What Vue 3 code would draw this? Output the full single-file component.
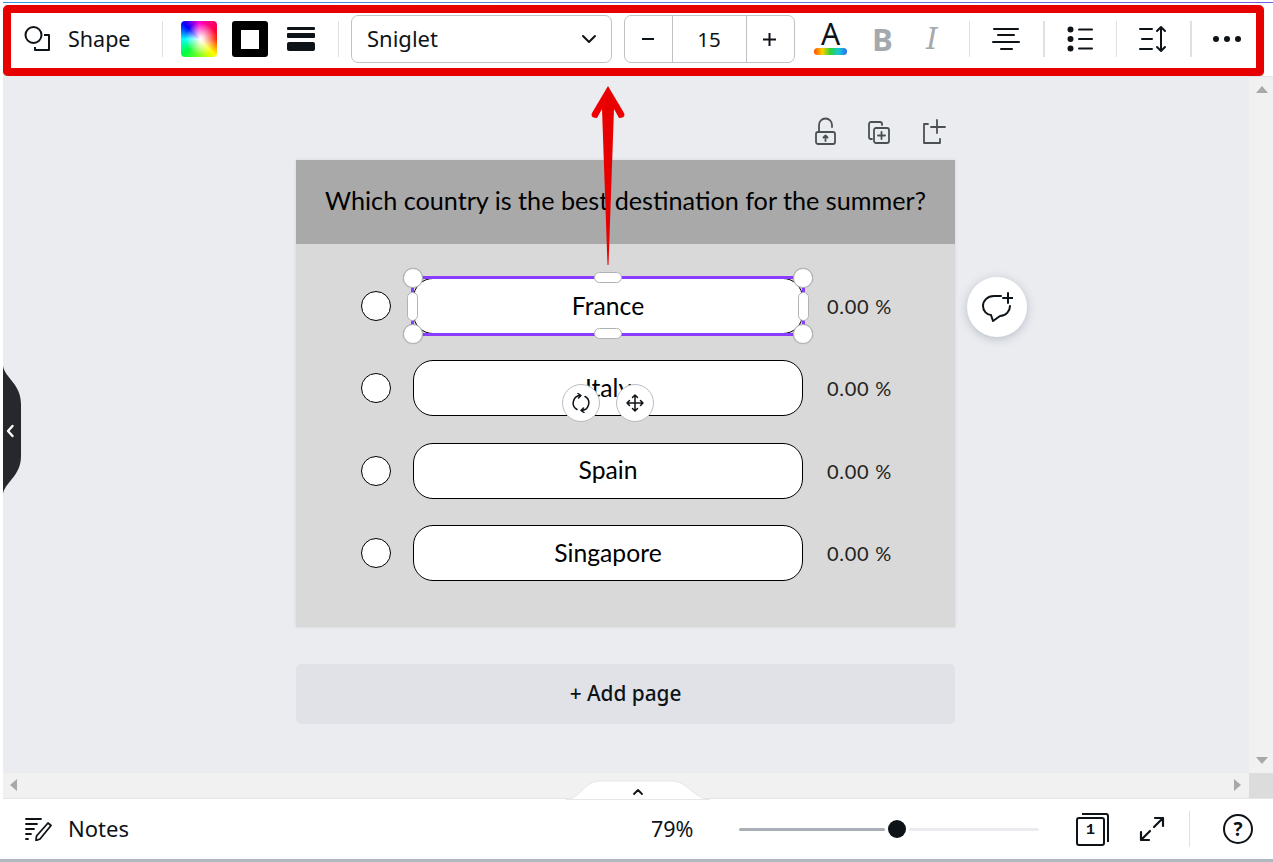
<script setup>
const rows = ['France', 'Italy', 'Spain', 'Singapore']
</script>

<template>
  <div class="app">
    <div class="topline"></div>
    <header class="toolbar">
      <svg class="ic shape" width="28" height="28" viewBox="0 0 28 28" fill="none" stroke="#0e1318" stroke-width="2"><circle cx="10.500" cy="10" r="8"/><path d="M21 10h5v15H12v-3" stroke-linejoin="round"/></svg>
      <span class="shape-label">Shape</span>
      <i class="sep s1"></i>
      <span class="swatch"></span>
      <span class="stroke"><b></b></span>
      <svg class="weight" width="28" height="24" viewBox="0 0 28 24"><rect y="0" width="28" height="3" rx="1" fill="#0e1318"/><rect y="6" width="28" height="5" rx="1" fill="#0e1318"/><rect y="15" width="28" height="9" rx="2" fill="#0e1318"/></svg>
      <i class="sep s2"></i>
      <div class="select"><span class="sel-label">Sniglet</span>
        <svg width="16" height="10" viewBox="0 0 16 10" fill="none" stroke="#0e1318" stroke-width="2" stroke-linecap="round" stroke-linejoin="round"><path d="M2 2l6 6 6-6"/></svg>
      </div>
      <div class="size">
        <span class="sz-btn minus">
          <svg width="12" height="2" viewBox="0 0 12 2"><rect width="12" height="2" fill="#0e1318"/></svg>
        </span>
        <span class="sz-val">15</span>
        <span class="sz-btn plus">
          <svg width="13" height="13" viewBox="0 0 13 13"><path d="M5.5 0h2v5.500h5.500v2h-5.500v5.500h-2v-5.500h-5.500v-2h5.500z" fill="#0e1318"/></svg>
        </span>
      </div>
      <div class="tcolor"><span class="letter">A</span><span class="rainbow"></span></div>
      <span class="bold">B</span>
      <span class="ital">I</span>
      <i class="sep s3"></i>
      <svg class="align" width="28" height="24" viewBox="0 0 28 24" fill="#0e1318"><rect x="1" y="1" width="26" height="2" rx="1"/><rect x="5" y="7" width="18" height="2" rx="1"/><rect x="0" y="14" width="28" height="2" rx="1"/><rect x="8" y="21" width="13" height="2" rx="1"/></svg>
      <i class="sep s4"></i>
      <svg class="list" width="26" height="26" viewBox="0 0 26 26" fill="#0e1318"><circle cx="3.500" cy="3.500" r="3"/><circle cx="3.500" cy="13" r="3"/><circle cx="3.500" cy="22.500" r="3"/><rect x="11" y="2.500" width="15" height="2" rx="1"/><rect x="11" y="12" width="15" height="2" rx="1"/><rect x="11" y="21.500" width="15" height="2" rx="1"/></svg>
      <i class="sep s5"></i>
      <svg class="spacing" width="28" height="28" viewBox="0 0 28 28" fill="none" stroke="#0e1318" stroke-width="2" stroke-linecap="round" stroke-linejoin="round"><path d="M1 4h12M3 14h10M1 24h12"/><path d="M22 2v24M18 6l4-4 4 4M18 22l4 4 4-4"/></svg>
      <i class="sep s6"></i>
      <svg class="dots" width="28" height="6" viewBox="0 0 28 6" fill="#0e1318"><circle cx="3" cy="3" r="3"/><circle cx="14" cy="3" r="3"/><circle cx="25" cy="3" r="3"/></svg>
    </header>

    <div class="middle">
      <main class="canvas">
        <div class="side-tab">
          <svg width="20" height="128" viewBox="0 0 20 128"><path d="M0 0C2 12 18 18 18 38V90C18 110 2 116 0 128Z" fill="#26282b"/><path d="M9.500 60L5 65l4.500 5" fill="none" stroke="#fff" stroke-width="2.400" stroke-linecap="round" stroke-linejoin="round"/></svg>
        </div>
        <div class="page-tools">
          <svg width="24" height="28" viewBox="0 0 24 28" fill="none" stroke="#4b5055" stroke-width="1.800" stroke-linecap="round" stroke-linejoin="round"><rect x="2" y="15" width="19" height="12" rx="2"/><path d="M5 15V8a6.500 6.500 0 0 1 13 0v2"/><path d="M11.500 24v-5M9.500 20.500l2-2 2 2"/></svg>
          <svg width="24" height="24" viewBox="1 1 24 24" fill="none" stroke="#4b5055" stroke-width="1.800" stroke-linecap="round" stroke-linejoin="round"><path d="M5 19H3a2 2 0 0 1-1-2V4a2 2 0 0 1 2-2h9a2 2 0 0 1 2 2v1"/><rect x="7" y="8" width="15" height="15" rx="2"/><path d="M14.500 12v7M11 15.500h7"/></svg>
          <svg width="24" height="26" viewBox="0 0 24 26" fill="none" stroke="#4b5055" stroke-width="1.800" stroke-linecap="round" stroke-linejoin="round"><path d="M6 5H2V24H18V20"/><path d="M15 1v13M9 8h14"/></svg>
        </div>
        <section class="page">
          <h1 class="question">Which country is the best destination for the summer?</h1>
          <div class="rows">
            <div v-for="(r, i) in rows" :key="r" class="row">
              <span class="radio"></span>
              <div class="pill" :class="{ sel: i === 0 }">
                <span class="pill-text">{{ r }}</span>
                <template v-if="i === 0">
                  <span class="corner tl"></span><span class="corner tr"></span><span class="corner bl"></span><span class="corner br"></span>
                  <span class="hbar top"></span><span class="hbar bot"></span>
                  <span class="vbar lf"></span><span class="vbar rt"></span>
                </template>
                <template v-if="i === 1">
                  <span class="float-btn rot">
                    <svg width="20" height="20" viewBox="0 0 20 20" fill="none" stroke="#0e1318" stroke-width="1.500" stroke-linecap="round" stroke-linejoin="round"><path d="M10 2.500A7.500 7.500 0 0 0 6 16.500M7 0.500L10 2.500L7.500 5"/><path d="M10 17.500A7.500 7.500 0 0 0 14 3.500M13 19.500L10 17.500L12.500 15"/></svg>
                  </span>
                  <span class="float-btn mov">
                    <svg width="20" height="20" viewBox="0 0 20 20" fill="none" stroke="#0e1318" stroke-width="1.500" stroke-linecap="round" stroke-linejoin="round"><path d="M10 2v16M2 10h16M7.500 4.500L10 2l2.500 2.500M7.500 15.500L10 18l2.500-2.500M4.500 7.500L2 10l2.500 2.500M15.500 7.500L18 10l-2.500 2.500"/></svg>
                  </span>
                </template>
              </div>
              <span class="pct">0.00 %</span>
            </div>
          </div>
        </section>
        <div class="add-page">+ Add page</div>
        <button class="comment" aria-label="Add comment">
          <svg width="32" height="30" viewBox="0 0 32 30" fill="none" stroke="#0e1318" stroke-width="2" stroke-linecap="round" stroke-linejoin="round"><path d="M20 4H13C6 4 2 9 2 14C2 19 6 23 10 23L12 29L19 24C25 24 29 19 29 14"/><path d="M27 1v10M22 6h10"/></svg>
        </button>
        <svg class="arrow" width="36" height="182" viewBox="0 0 36 182">
          <defs><linearGradient id="arr" x1="0" x2="1" y1="0" y2="0"><stop offset="0" stop-color="#f20000"/><stop offset=".55" stop-color="#e60000"/><stop offset="1" stop-color="#f20000"/></linearGradient></defs>
          <path d="M18 1L34 28Q36 33 29 33L24 24L18.500 180H17.500L12 24L7 33Q0 33 2 28Z" fill="url(#arr)"/>
        </svg>
      </main>
      <aside class="vscroll">
        <span class="tri up"></span>
        <span class="tri down"></span>
      </aside>
    </div>

    <div class="hscroll">
      <span class="tri left"></span>
      <svg class="tab" width="144" height="20" viewBox="0 0 144 20"><path d="M0 19.500C14 19.500 18 1 34 1H106C122 1 128 19.500 144 19.500Z" fill="#fff" stroke="#e6e7e9"/></svg>
      <svg class="tab-chev" width="12" height="8" viewBox="0 0 12 8" fill="none" stroke="#0e1318" stroke-width="1.800" stroke-linecap="round" stroke-linejoin="round"><path d="M2 6l4-4 4 4"/></svg>
      <span class="tri right"></span>
      <span class="corner-box"></span>
    </div>

    <footer class="footer">
      <svg class="notes-ic" width="28" height="24" viewBox="0 0 28 24" fill="none" stroke="#0e1318" stroke-width="1.800" stroke-linecap="round" stroke-linejoin="round"><path d="M1 2h15M1 7h11M1 12h8M1 17h5M1 22h2"/><path d="M23 6l3 2.500L15 22l-4 1.500 0.500-4.500z"/></svg>
      <span class="notes">Notes</span>
      <span class="zoom">79%</span>
      <div class="slider"><span class="track done"></span><span class="knob"></span><span class="track"></span></div>
      <div class="pages">
        <svg width="34" height="34" viewBox="0 0 34 34" fill="none" stroke="#0e1318" stroke-width="2" stroke-linejoin="round"><path d="M6 2h24a2 2 0 0 1 2 2v26"/><rect x="1" y="6" width="27" height="27" rx="2"/></svg>
        <span class="pages-n">1</span>
      </div>
      <svg class="expand" width="26" height="26" viewBox="0 0 26 26" fill="none" stroke="#0e1318" stroke-width="2.200" stroke-linecap="round" stroke-linejoin="round"><path d="M15 11L24 2M16 2h8v8M11 15l-9 9M2 16v8h8"/></svg>
      <i class="sep s7"></i>
      <span class="help">?</span>
    </footer>
    <div class="bottomline"></div>
  </div>
</template>

<style>
html, body { margin: 0; background: #fff; overflow: hidden; }
</style>

<style scoped>
.app { width: 1273px; height: 862px; display: flex; flex-direction: column; font-family: "Noto Sans", sans-serif; color: #0e1318; background: #fff; overflow: hidden; padding-left: 3px; box-sizing: border-box; }
.topline { height: 1px; margin: 2px 0 2px; flex: none; background: linear-gradient(90deg, #3d9be0, #7d5ae6); }
.toolbar { flex: none; width: 1261px; height: 71px; box-sizing: border-box; border: 8px solid #e60000; border-radius: 5px; background: #fff; display: flex; align-items: center; position: relative; box-shadow: 0 1px 1px rgba(0,0,0,.35); padding-bottom: 3px; }
.sep { display: block; flex: none; width: 1px; height: 36px; background: #dde0e4; }
.shape { margin-left: 12px; }
.shape-label { margin: 0 0 2px 17px; font-size: 21.500px; width: 64px; white-space: nowrap; }
.s1 { margin-left: 30px; }
.swatch { margin-left: 18px; width: 36px; height: 36px; border-radius: 4px; flex: none; background: radial-gradient(circle at 55% 50%, #fff 0, rgba(255,255,255,.85) 12%, rgba(255,255,255,0) 60%), conic-gradient(from 0deg, #ff00d0 0deg, #ff0040 60deg, #ff2000 90deg, #ffff00 135deg, #00ff40 225deg, #00ffff 270deg, #0000ff 315deg, #ff00d0 360deg); }
.stroke { margin-left: 15px; width: 36px; height: 36px; border-radius: 3px; background: #000; display: flex; align-items: center; justify-content: center; flex: none; }
.stroke b { display: block; width: 18px; height: 19px; background: #fff; }
.weight { margin-left: 19px; flex: none; }
.s2 { margin-left: 23px; }
.select { margin-left: 12px; width: 261px; height: 48px; box-sizing: border-box; border: 1px solid #bfc3c8; border-radius: 7px; display: flex; align-items: center; justify-content: space-between; padding: 0 14px 0 15px; font-size: 22px; flex: none; }
.sel-label { margin-bottom: 2px; }
.size { margin-left: 12px; width: 171px; height: 48px; box-sizing: border-box; border: 1px solid #bfc3c8; border-radius: 7px; display: flex; align-items: stretch; flex: none; }
.sz-btn { width: 47px; box-sizing: border-box; display: flex; align-items: center; justify-content: center; flex: none; }
.minus { padding-right: 1px; }
.plus { padding-right: 2px; }
.sz-val { width: 75px; box-sizing: border-box; padding-right: 1px; flex: none; display: flex; align-items: center; justify-content: center; font-size: 20.500px; border-left: 1px solid #bfc3c8; border-right: 1px solid #bfc3c8; }
.tcolor { margin: 0 0 4px 19px; width: 33px; height: 36px; display: flex; flex-direction: column; align-items: center; flex: none; }
.letter { font-size: 30px; line-height: 29px; height: 29px; }
.rainbow { width: 33px; height: 7px; flex: none; border-radius: 4px; background: linear-gradient(90deg, #ff4b00, #ffd000, #2fd13a, #18c8d8, #2a6cf0); }
.bold { margin-left: 25px; width: 18px; font-size: 31px; font-weight: 700; color: #a4a9ae; line-height: 1; flex: none; font-family: "Open Sans", sans-serif; }
.ital { margin-left: 33px; width: 18px; font-size: 30px; font-style: italic; color: #a4a9ae; line-height: 1; flex: none; text-align: center; font-family: "DejaVu Serif", serif; }
.s3 { margin-left: 28px; }
.align { margin-left: 22px; flex: none; }
.s4 { margin-left: 23px; width: 2px; }
.list { margin-left: 22px; flex: none; }
.s5 { margin-left: 23px; }
.spacing { margin-left: 22px; flex: none; }
.s6 { margin-left: 23px; width: 2px; }
.dots { margin-left: 21px; flex: none; }

.middle { flex: 1; display: flex; min-height: 0; }
.canvas { width: 1246px; flex: none; background: #ebecf0; position: relative; display: flex; flex-direction: column; align-items: center; box-sizing: border-box; padding: 40px 0 0 0; overflow: hidden; }
.side-tab { position: absolute; left: 0; top: 290px; width: 20px; height: 128px; }
.side-tab svg { display: block; }
.page-tools { width: 659px; height: 44px; flex: none; display: flex; justify-content: flex-end; gap: 30px; align-items: flex-end; box-sizing: border-box; padding: 0 9px 15px 0; margin-right: 1px; }
.page { width: 659px; height: 467px; flex: none; background: #d9d9d9; box-shadow: 0 0 3px rgba(0,0,0,.1); margin-right: 1px; }
.question { margin: 0; height: 84px; box-sizing: border-box; padding-bottom: 4px; background: #a9a9a9; color: #000; font-size: 25.200px; font-weight: 400; display: flex; align-items: center; justify-content: center; font-family: "Lato", sans-serif; white-space: nowrap; }
.rows { padding: 34.200px 0 0 65px; display: flex; flex-direction: column; gap: 26.300px; }
.row { display: flex; align-items: center; height: 56px; }
.radio { width: 30px; height: 30px; box-sizing: border-box; border: 1px solid #000; background: #fff; border-radius: 50%; flex: none; }
.pill { margin-left: 22px; width: 390px; height: 56px; box-sizing: border-box; padding-bottom: 2px; border: 1px solid #000; border-radius: 20px; background: #fff; position: relative; display: flex; align-items: center; justify-content: center; color: #000; font-size: 24.700px; font-family: "Lato", sans-serif; flex: none; }
.sel::before { content: ""; position: absolute; inset: -3px; border: 3.500px solid #8b3dff; border-radius: 0; pointer-events: none; }
.pill-text { position: relative; }
.pct { margin-left: 24px; font-size: 20px; color: #222; font-family: "Lato", sans-serif; white-space: nowrap; letter-spacing: .7px; }
.corner { position: absolute; background: #fff; border: 1px solid #aeb3b8; border-radius: 50%; box-sizing: border-box; width: 20px; height: 20px; box-shadow: 0 0 1px rgba(0,0,0,.3); }
.tl { left: -11px; top: -11px; } .tr { right: -11px; top: -11px; } .bl { left: -11px; bottom: -11px; } .br { right: -11px; bottom: -11px; }
.hbar { position: absolute; left: 180px; width: 28px; height: 11px; background: #fff; border: 1px solid #aeb3b8; border-radius: 6px; box-sizing: border-box; }
.top { top: -7px; } .bot { bottom: -6px; }
.vbar { position: absolute; top: 13px; width: 11px; height: 29px; background: #fff; border: 1px solid #aeb3b8; border-radius: 6px; box-sizing: border-box; }
.lf { left: -7px; } .rt { right: -7px; }
.float-btn { position: absolute; top: 22.500px; width: 38px; height: 38px; border-radius: 50%; background: #fff; border: 1px solid #b9bdc2; box-sizing: border-box; display: flex; align-items: center; justify-content: center; }
.rot { left: 148px; } .mov { left: 202px; }
.add-page { margin-top: 37px; margin-right: 1px; padding-bottom: 2px; box-sizing: border-box; width: 659px; height: 60px; flex: none; border-radius: 5px; background: #e0e2e8; display: flex; align-items: center; justify-content: center; font-size: 20.800px; font-weight: 500; }
.comment { position: absolute; left: 964px; top: 201px; width: 60px; height: 60px; padding: 0; border: 0; border-radius: 50%; background: #fff; box-shadow: 0 2px 10px rgba(64,87,109,.3); display: flex; align-items: center; justify-content: center; }
.arrow { position: absolute; left: 587px; top: 9px; }
.vscroll { flex: 1; background: #f1f1f1; position: relative; border-top: 1px solid #e5e5e5; }
.tri { position: absolute; width: 0; height: 0; }
.up { left: 7px; top: 9px; border: 6px solid transparent; border-top: 0; border-bottom: 7px solid #a8a8a8; }
.down { left: 7px; bottom: 9px; border: 6px solid transparent; border-bottom: 0; border-top: 7px solid #a8a8a8; }
.hscroll { flex: none; height: 25px; background: #f1f1f1; position: relative; border-bottom: 1px solid #e4e5e7; }
.left { left: 7px; top: 6px; border: 6px solid transparent; border-left: 0; border-right: 7px solid #a8a8a8; }
.right { left: 1231px; top: 6px; border: 6px solid transparent; border-right: 0; border-left: 7px solid #a8a8a8; }
.corner-box { position: absolute; left: 1246px; top: 0; width: 24px; height: 25px; background: #dcdcdc; }
.tab { position: absolute; left: 563px; top: 7px; }
.tab-chev { position: absolute; left: 629px; top: 15px; }
.footer { flex: none; height: 60px; display: flex; align-items: center; position: relative; }
.notes-ic { margin-left: 22px; flex: none; }
.notes { margin: 0 0 2px 15px; font-size: 22px; width: 60px; }
.zoom { margin: 0 0 2px 523px; font-size: 21.500px; width: 42px; white-space: nowrap; }
.slider { margin-left: 46px; width: 300px; display: flex; align-items: center; flex: none; }
.track { display: block; height: 3px; background: #e9ebee; flex: 1; border-radius: 2px; }
.done { background: #a9b0b8; flex: none; width: 146px; }
.knob { display: block; width: 18px; height: 18px; border-radius: 50%; background: #0e1318; margin: 0 3px; flex: none; }
.pages { margin-left: 37px; flex: none; position: relative; width: 34px; height: 34px; }
.pages svg { display: block; }
.pages-n { position: absolute; left: 1px; top: 9px; width: 27px; text-align: center; font-size: 15px; line-height: 20px; font-family: "Liberation Mono", monospace; font-weight: 700; }
.expand { margin-left: 29px; flex: none; }
.s7 { margin-left: 24px; }
.help { margin-left: 33px; width: 30px; height: 30px; box-sizing: border-box; border: 2px solid #0e1318; border-radius: 50%; display: flex; align-items: center; justify-content: center; font-size: 19px; font-weight: 700; flex: none; }
.bottomline { height: 3px; flex: none; margin-left: -3px; background: #b0b8c0; }
</style>
